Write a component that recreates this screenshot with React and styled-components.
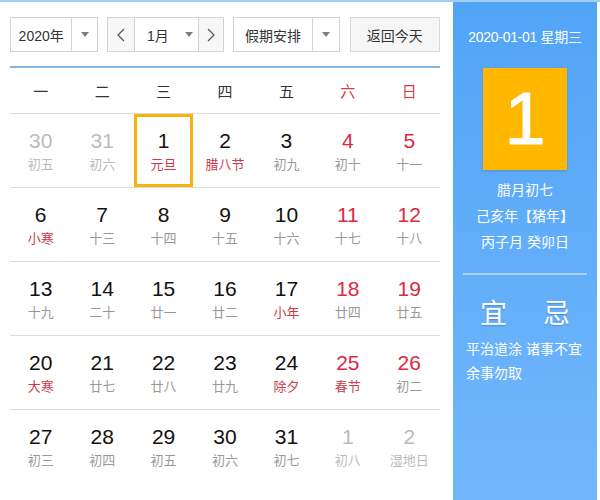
import React from 'react';
import styled, { createGlobalStyle } from 'styled-components';

const GlobalStyle = createGlobalStyle`
  html, body {
    margin: 0;
    padding: 0;
    background: #ffffff;
  }
  body {
    font-family: "Liberation Sans", "Noto Sans CJK SC", sans-serif;
  }
`;

const Page = styled.div`
  display: flex;
  width: 600px;
  height: 500px;
  box-sizing: border-box;
  border-top: 2px solid #a3cff1;
  overflow: hidden;
`;

const Main = styled.div`
  width: 453px;
  box-sizing: border-box;
  padding: 15px 13px 0 10px;
`;

const Toolbar = styled.div`
  display: flex;
  align-items: stretch;
  height: 35px;
  gap: 9px;
`;

const SelectBox = styled.div`
  display: flex;
  width: ${(p) => p.width}px;
  box-sizing: border-box;
  border: 1px solid #d3d3d3;
  background: #ffffff;
  font-size: 14px;
  color: #333333;
`;

const SelectLabel = styled.div`
  flex: 1;
  display: flex;
  align-items: center;
  justify-content: center;
`;

const Arrow = styled.div`
  width: ${(p) => p.width || 25}px;
  display: flex;
  align-items: center;
  justify-content: center;
  border-left: ${(p) => (p.bordered ? '1px solid #d3d3d3' : 'none')};
  border-right: ${(p) => (p.borderRight ? '1px solid #d3d3d3' : 'none')};
  background: ${(p) => (p.shaded ? '#f7f7f7' : 'transparent')};
`;

const Caret = styled.span`
  width: 0;
  height: 0;
  border-left: 4px solid transparent;
  border-right: 4px solid transparent;
  border-top: 5px solid #808080;
`;

const TodayButton = styled.button`
  margin-left: 1px;
  width: 91px;
  box-sizing: border-box;
  border: 1px solid #d8d8d8;
  background: #f6f6f6;
  font-family: inherit;
  font-size: 14px;
  color: #333333;
  padding: 0;
  cursor: pointer;
`;

const BlueRule = styled.div`
  margin-top: 14px;
  height: 2px;
  background: #7db9e6;
`;

const Grid = styled.div`
  display: grid;
  grid-template-columns: repeat(7, 1fr);
`;

const WeekDay = styled.div`
  height: 45px;
  display: flex;
  align-items: center;
  justify-content: center;
  border-bottom: 1px solid #dddddd;
  font-size: 15px;
  color: ${(p) => (p.weekend ? '#d53a4f' : '#333333')};
`;

const Cell = styled.div`
  height: 74px;
  display: flex;
  padding: 1px 1px 0;
  box-sizing: border-box;
  border-bottom: ${(p) => (p.last ? 'none' : '1px solid #dddddd')};
`;

const CellInner = styled.div`
  flex: 1;
  display: flex;
  flex-direction: column;
  align-items: center;
  justify-content: center;
  gap: 3px;
  box-sizing: border-box;
  border: 3px solid ${(p) => (p.selected ? '#f7b30b' : 'transparent')};
  margin-top: -1px;
`;

const DayNum = styled.div`
  font-size: 21px;
  line-height: 24px;
  color: ${(p) => (p.other ? '#bbbbbb' : p.weekend ? '#e1283f' : '#111111')};
`;

const Lunar = styled.div`
  font-size: 13px;
  line-height: 17px;
  color: ${(p) => (p.other ? '#bbbbbb' : p.festival ? '#cc3a4c' : '#999999')};
`;

const Side = styled.div`
  width: 144px;
  margin-top: -2px;
  display: flex;
  flex-direction: column;
  align-items: center;
  background: linear-gradient(#51a4f7, #72b7fc);
  color: #ffffff;
`;

const SideDate = styled.div`
  margin-top: 26px;
  font-size: 14px;
  letter-spacing: -0.3px;
`;

const BigDay = styled.div`
  margin-top: 22px;
  width: 84px;
  height: 102px;
  display: flex;
  align-items: center;
  justify-content: center;
  background: #ffb700;
  box-shadow: 0 1px 2px rgba(0, 0, 0, 0.15);
  font-size: 74px;
  line-height: 1;
  font-family: "Liberation Sans", sans-serif;
  -webkit-text-stroke: 1px #ffffff;
`;

const InfoLines = styled.div`
  margin-top: 7px;
  display: flex;
  flex-direction: column;
  align-items: center;
  font-size: 14px;
  line-height: 26px;
`;

const SideRule = styled.div`
  margin-top: 18px;
  width: 124px;
  height: 2px;
  background: rgba(255, 255, 255, 0.45);
`;

const YiJi = styled.div`
  margin-top: 22px;
  display: flex;
  gap: 36px;
  font-size: 27px;
  line-height: 34px;
  text-shadow: 0 1px 1px rgba(0, 0, 0, 0.2);
`;

const Advice = styled.div`
  align-self: stretch;
  padding: 6px 6px 0 13px;
  font-size: 14px;
  line-height: 24px;
`;

const Chevron = ({ dir }) => (
  <svg width="8" height="14" viewBox="0 0 8 14">
    <polyline
      points={dir === 'left' ? '7,1 1,7 7,13' : '1,1 7,7 1,13'}
      fill="none"
      stroke="#555"
      strokeWidth="1.2"
    />
  </svg>
);

const festivals = new Set(['元旦', '腊八节', '小寒', '小年', '大寒', '除夕', '春节']);

const rows = [
  [[30, '初五', 1], [31, '初六', 1], [1, '元旦'], [2, '腊八节'], [3, '初九'], [4, '初十'], [5, '十一']],
  [[6, '小寒'], [7, '十三'], [8, '十四'], [9, '十五'], [10, '十六'], [11, '十七'], [12, '十八']],
  [[13, '十九'], [14, '二十'], [15, '廿一'], [16, '廿二'], [17, '小年'], [18, '廿四'], [19, '廿五']],
  [[20, '大寒'], [21, '廿七'], [22, '廿八'], [23, '廿九'], [24, '除夕'], [25, '春节'], [26, '初二']],
  [[27, '初三'], [28, '初四'], [29, '初五'], [30, '初六'], [31, '初七'], [1, '初八', 1], [2, '湿地日', 1]],
];

const weekdays = ['一', '二', '三', '四', '五', '六', '日'];

export default function App() {
  return (
    <>
      <GlobalStyle />
      <Page>
        <Main>
          <Toolbar>
            <SelectBox width={89}>
              <SelectLabel>2020年</SelectLabel>
              <Arrow bordered><Caret /></Arrow>
            </SelectBox>
            <SelectBox width={118}>
              <Arrow width={26} borderRight shaded><Chevron dir="left" /></Arrow>
              <SelectLabel>1月</SelectLabel>
              <Arrow width={18}><Caret /></Arrow>
              <Arrow width={24} bordered shaded><Chevron dir="right" /></Arrow>
            </SelectBox>
            <SelectBox width={107}>
              <SelectLabel>假期安排</SelectLabel>
              <Arrow width={26} bordered><Caret /></Arrow>
            </SelectBox>
            <TodayButton>返回今天</TodayButton>
          </Toolbar>
          <BlueRule />
          <Grid>
            {weekdays.map((w, i) => (
              <WeekDay key={w} weekend={i > 4}>{w}</WeekDay>
            ))}
            {rows.map((row, r) =>
              row.map(([day, lunar, other], c) => (
                <Cell key={`${r}-${c}`} last={r === rows.length - 1}>
                  <CellInner selected={r === 0 && day === 1 && !other}>
                    <DayNum other={other} weekend={c > 4}>{day}</DayNum>
                    <Lunar other={other} festival={festivals.has(lunar)}>{lunar}</Lunar>
                  </CellInner>
                </Cell>
              ))
            )}
          </Grid>
        </Main>
        <Side>
          <SideDate>2020-01-01 星期三</SideDate>
          <BigDay>1</BigDay>
          <InfoLines>
            <div>腊月初七</div>
            <div>己亥年【猪年】</div>
            <div>丙子月 癸卯日</div>
          </InfoLines>
          <SideRule />
          <YiJi>
            <span>宜</span>
            <span>忌</span>
          </YiJi>
          <Advice>平治道涂 诸事不宜 余事勿取</Advice>
        </Side>
      </Page>
    </>
  );
}
